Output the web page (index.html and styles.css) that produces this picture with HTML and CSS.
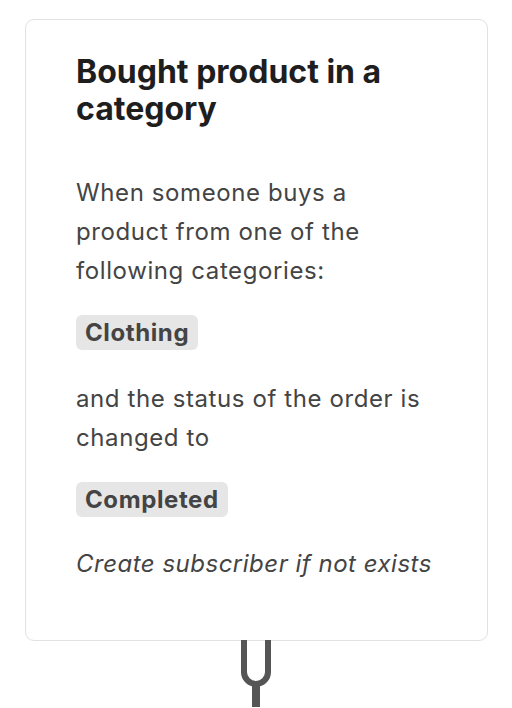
FILE: index.html
```html
<!DOCTYPE html>
<html>
<head>
<meta charset="utf-8">
<link rel="stylesheet" href="styles.css">
</head>
<body>
<div class="flow">
  <div class="card">
    <h2 class="title">Bought product in a category</h2>
    <p class="text text-first">When someone buys a product from one of the following categories:</p>
    <div class="chip-row chip-row-first"><span class="chip">Clothing</span></div>
    <p class="text text-second">and the status of the order is changed to</p>
    <div class="chip-row chip-row-second"><span class="chip">Completed</span></div>
    <p class="note">Create subscriber if not exists</p>
  </div>
  <svg class="connector" width="40" height="67" viewBox="0 0 40 67">
    <path d="M5 0 V32 A12 12 0 0 0 29 32 V0" fill="none" stroke="#555" stroke-width="6"/>
    <path d="M17 44 V67" fill="none" stroke="#555" stroke-width="8"/>
  </svg>
</div>
</body>
</html>
```
FILE: styles.css
```css
html, body {
  margin: 0;
  padding: 0;
  background: #ffffff;
}

body {
  font-family: Inter, "Noto Sans", "Liberation Sans", sans-serif;
  color: #444444;
}

.flow {
  display: flex;
  flex-direction: column;
  align-items: flex-start;
  padding: 19px 0 0 25px;
}

.card {
  box-sizing: border-box;
  width: 463px;
  height: 622px;
  border: 1.5px solid #e2e2e2;
  border-radius: 9px;
  background: #fff;
  padding: 33px 50px 0 50px;
}

.title {
  margin: 0;
  font-size: 32px;
  line-height: 37px;
  font-weight: 700;
  color: #1e1e1e;
}

.text {
  margin: 0;
  font-size: 24px;
  line-height: 39px;
  font-weight: 400;
  letter-spacing: 0.6px;
}

.text-first {
  margin-top: 46px;
}

.text-second {
  margin-top: 29px;
}

.chip-row {
  display: flex;
}

.chip-row-first {
  margin-top: 25px;
}

.chip-row-second {
  margin-top: 25px;
}

.chip {
  display: inline-block;
  background: #e6e6e6;
  border-radius: 6px;
  padding: 0 9px;
  height: 35px;
  line-height: 35px;
  font-size: 24px;
  font-weight: 700;
  color: #444444;
  letter-spacing: 0.6px;
}

.note {
  margin: 27px 0 0;
  font-size: 24px;
  line-height: 39px;
  font-style: italic;
  letter-spacing: 0.5px;
}

.connector {
  display: block;
  margin-left: 214px;
  margin-top: -1px;
}
```
